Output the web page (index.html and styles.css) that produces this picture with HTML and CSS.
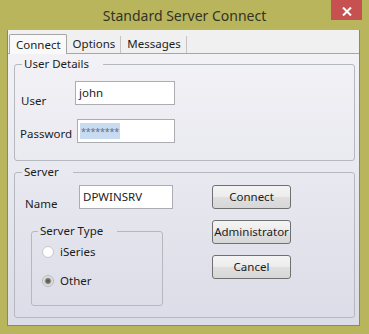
FILE: index.html
```html
<!DOCTYPE html>
<html>
<head>
<meta charset="utf-8">
<link rel="stylesheet" href="styles.css">
</head>
<body>
<div class="window">
  <div class="titlebar">
    <span class="spacer"></span>
    <span class="title">Standard Server Connect</span>
    <div class="close-wrap">
      <div class="close">
        <svg width="10" height="9" viewBox="0 0 10 9"><path d="M1 0.5 L9 8.5 M9 0.5 L1 8.5" stroke="#fff" stroke-width="2" fill="none"/></svg>
      </div>
    </div>
  </div>
  <div class="client">
    <div class="tabs">
      <div class="tab active">Connect</div>
      <div class="tab">Options</div>
      <div class="tab">Messages</div>
    </div>
    <div class="panel">
      <fieldset class="group user-group">
        <legend>User Details</legend>
        <div class="field-row row-user">
          <span class="lbl lbl-user">User</span>
          <div class="textbox tb-user">john</div>
        </div>
        <div class="field-row row-pass">
          <span class="lbl lbl-pass">Password</span>
          <div class="textbox tb-pass"><span class="sel">********</span></div>
        </div>
      </fieldset>
      <fieldset class="group server-group">
        <legend>Server</legend>
        <div class="server-body">
          <div class="server-left">
            <div class="field-row row-name">
              <span class="lbl lbl-name">Name</span>
              <div class="textbox tb-name">DPWINSRV</div>
            </div>
            <fieldset class="group type-group">
              <legend>Server Type</legend>
              <div class="radio-row"><span class="radio"></span><span>iSeries</span></div>
              <div class="radio-row second"><span class="radio checked"></span><span>Other</span></div>
            </fieldset>
          </div>
          <div class="buttons">
            <div class="btn">Connect</div>
            <div class="btn">Administrator</div>
            <div class="btn">Cancel</div>
          </div>
        </div>
      </fieldset>
    </div>
  </div>
</div>
</body>
</html>
```

FILE: styles.css
```css
html, body {
  margin: 0;
  padding: 0;
}
body {
  width: 369px;
  height: 334px;
  overflow: hidden;
  background: #b9b55d;
  font-family: "Noto Sans", "Open Sans", sans-serif;
  font-size: 11.5px;
  color: #1c1c1c;
}
.window {
  display: flex;
  flex-direction: column;
  height: 334px;
}
.titlebar {
  height: 30px;
  display: grid;
  grid-template-columns: 1fr auto 1fr;
}
.title {
  font-size: 14px;
  line-height: 30px;
  padding-top: 1px;
  color: #333326;
}
.close-wrap {
  display: flex;
  justify-content: flex-end;
  align-items: flex-start;
  padding-right: 7px;
}
.close {
  width: 31px;
  height: 20px;
  background: #c75050;
  display: flex;
  align-items: center;
  justify-content: center;
  padding-top: 2px;
  box-sizing: border-box;
}
.client {
  margin: 0 9px 8px 7px;
  flex: 1;
  display: flex;
  flex-direction: column;
  background: #f0f0f0;
  border-left: 1px solid #8d8a55;
  border-right: 1px solid #8d8a55;
  border-bottom: 1px solid #8d8a55;
}
.tabs {
  height: 23px;
  display: flex;
  align-items: flex-end;
  padding-left: 1px;
  border-bottom: 1px solid #a6a6a6;
}
.tab {
  height: 17px;
  line-height: 14px;
  padding: 1px 5px 0 6px;
  box-sizing: border-box;
  border-right: 1px solid #c4c4c4;
  white-space: nowrap;
}
.tab.active {
  height: 20px;
  padding-top: 3px;
  margin-bottom: -1px;
  background: #f9f9f9;
  border: 1px solid #a6a6a6;
  border-bottom: none;
  border-radius: 2px 2px 0 0;
}
.panel {
  flex: 1;
  padding: 3px 4px 0 6px;
  background: linear-gradient(#f2f2f6, #dcdce8);
}
.group {
  margin: 0;
  padding: 0;
  min-width: 0;
  border: 1px solid #b4b9c0;
  border-radius: 3px;
}
.group legend {
  margin-left: 7px;
  padding: 0 14px 0 2px;
  line-height: 14px;
}
.user-group {
  padding-bottom: 17px;
}
.field-row {
  display: flex;
  align-items: flex-start;
  height: 24px;
}
.row-user {
  margin-top: 10px;
}
.row-pass {
  margin-top: 14px;
}
.lbl {
  line-height: 14px;
  flex: none;
}
.lbl-user {
  margin: 13px 0 0 6px;
  width: 54px;
}
.lbl-pass {
  margin: 8px 0 0 5px;
  width: 57px;
}
.lbl-name {
  margin: 12px 0 0 10px;
  width: 54px;
}
.textbox {
  box-sizing: border-box;
  height: 24px;
  background: #fff;
  border: 1px solid #abadb3;
  line-height: 21px;
  padding-left: 3px;
  white-space: nowrap;
}
.tb-user {
  width: 100px;
}
.tb-pass {
  width: 98px;
  padding-left: 2px;
  display: flex;
  align-items: center;
}
.tb-name {
  width: 94px;
}
.sel {
  display: inline-block;
  height: 16px;
  line-height: 17px;
  padding: 0 1px;
  background: #c8dbf1;
  color: #5f6f8a;
  font-size: 9px;
  letter-spacing: -0.2px;
}
.server-group {
  margin-top: 4px;
  padding-bottom: 11px;
}
.server-body {
  display: flex;
}
.server-left {
  width: 197px;
  flex: none;
}
.row-name {
  margin-top: 6px;
}
.type-group {
  margin: 15px 0 0 16px;
  width: 132px;
  box-sizing: border-box;
  padding-bottom: 17px;
}
.type-group legend {
  margin-left: 6px;
}
.radio-row {
  display: flex;
  align-items: center;
  height: 14px;
  margin-top: 7px;
  padding-left: 10px;
  line-height: 14px;
}
.radio-row.second {
  margin-top: 15px;
}
.radio {
  width: 12px;
  height: 12px;
  box-sizing: border-box;
  border-radius: 50%;
  border: 1px solid #c9c9c9;
  background: radial-gradient(circle at 50% 40%, #ffffff 55%, #f0f0f0 100%);
  margin-right: 6px;
  flex: none;
}
.radio.checked {
  border-color: #b5b5b5;
  background: radial-gradient(circle, #505050 0, #6e6e6e 2px, #a9a9a9 3px, #e4e4e4 4px, #f4f4f4 100%);
}
.buttons {
  display: flex;
  flex-direction: column;
  gap: 11px;
  margin-top: 6px;
}
.btn {
  box-sizing: border-box;
  width: 79px;
  height: 24px;
  border: 1px solid #707070;
  border-radius: 3px;
  background: linear-gradient(#f4f4f4, #ececec 50%, #dfdfdf 51%, #d7d7d7);
  text-align: center;
  line-height: 21px;
  white-space: nowrap;
  overflow: hidden;
}
```
